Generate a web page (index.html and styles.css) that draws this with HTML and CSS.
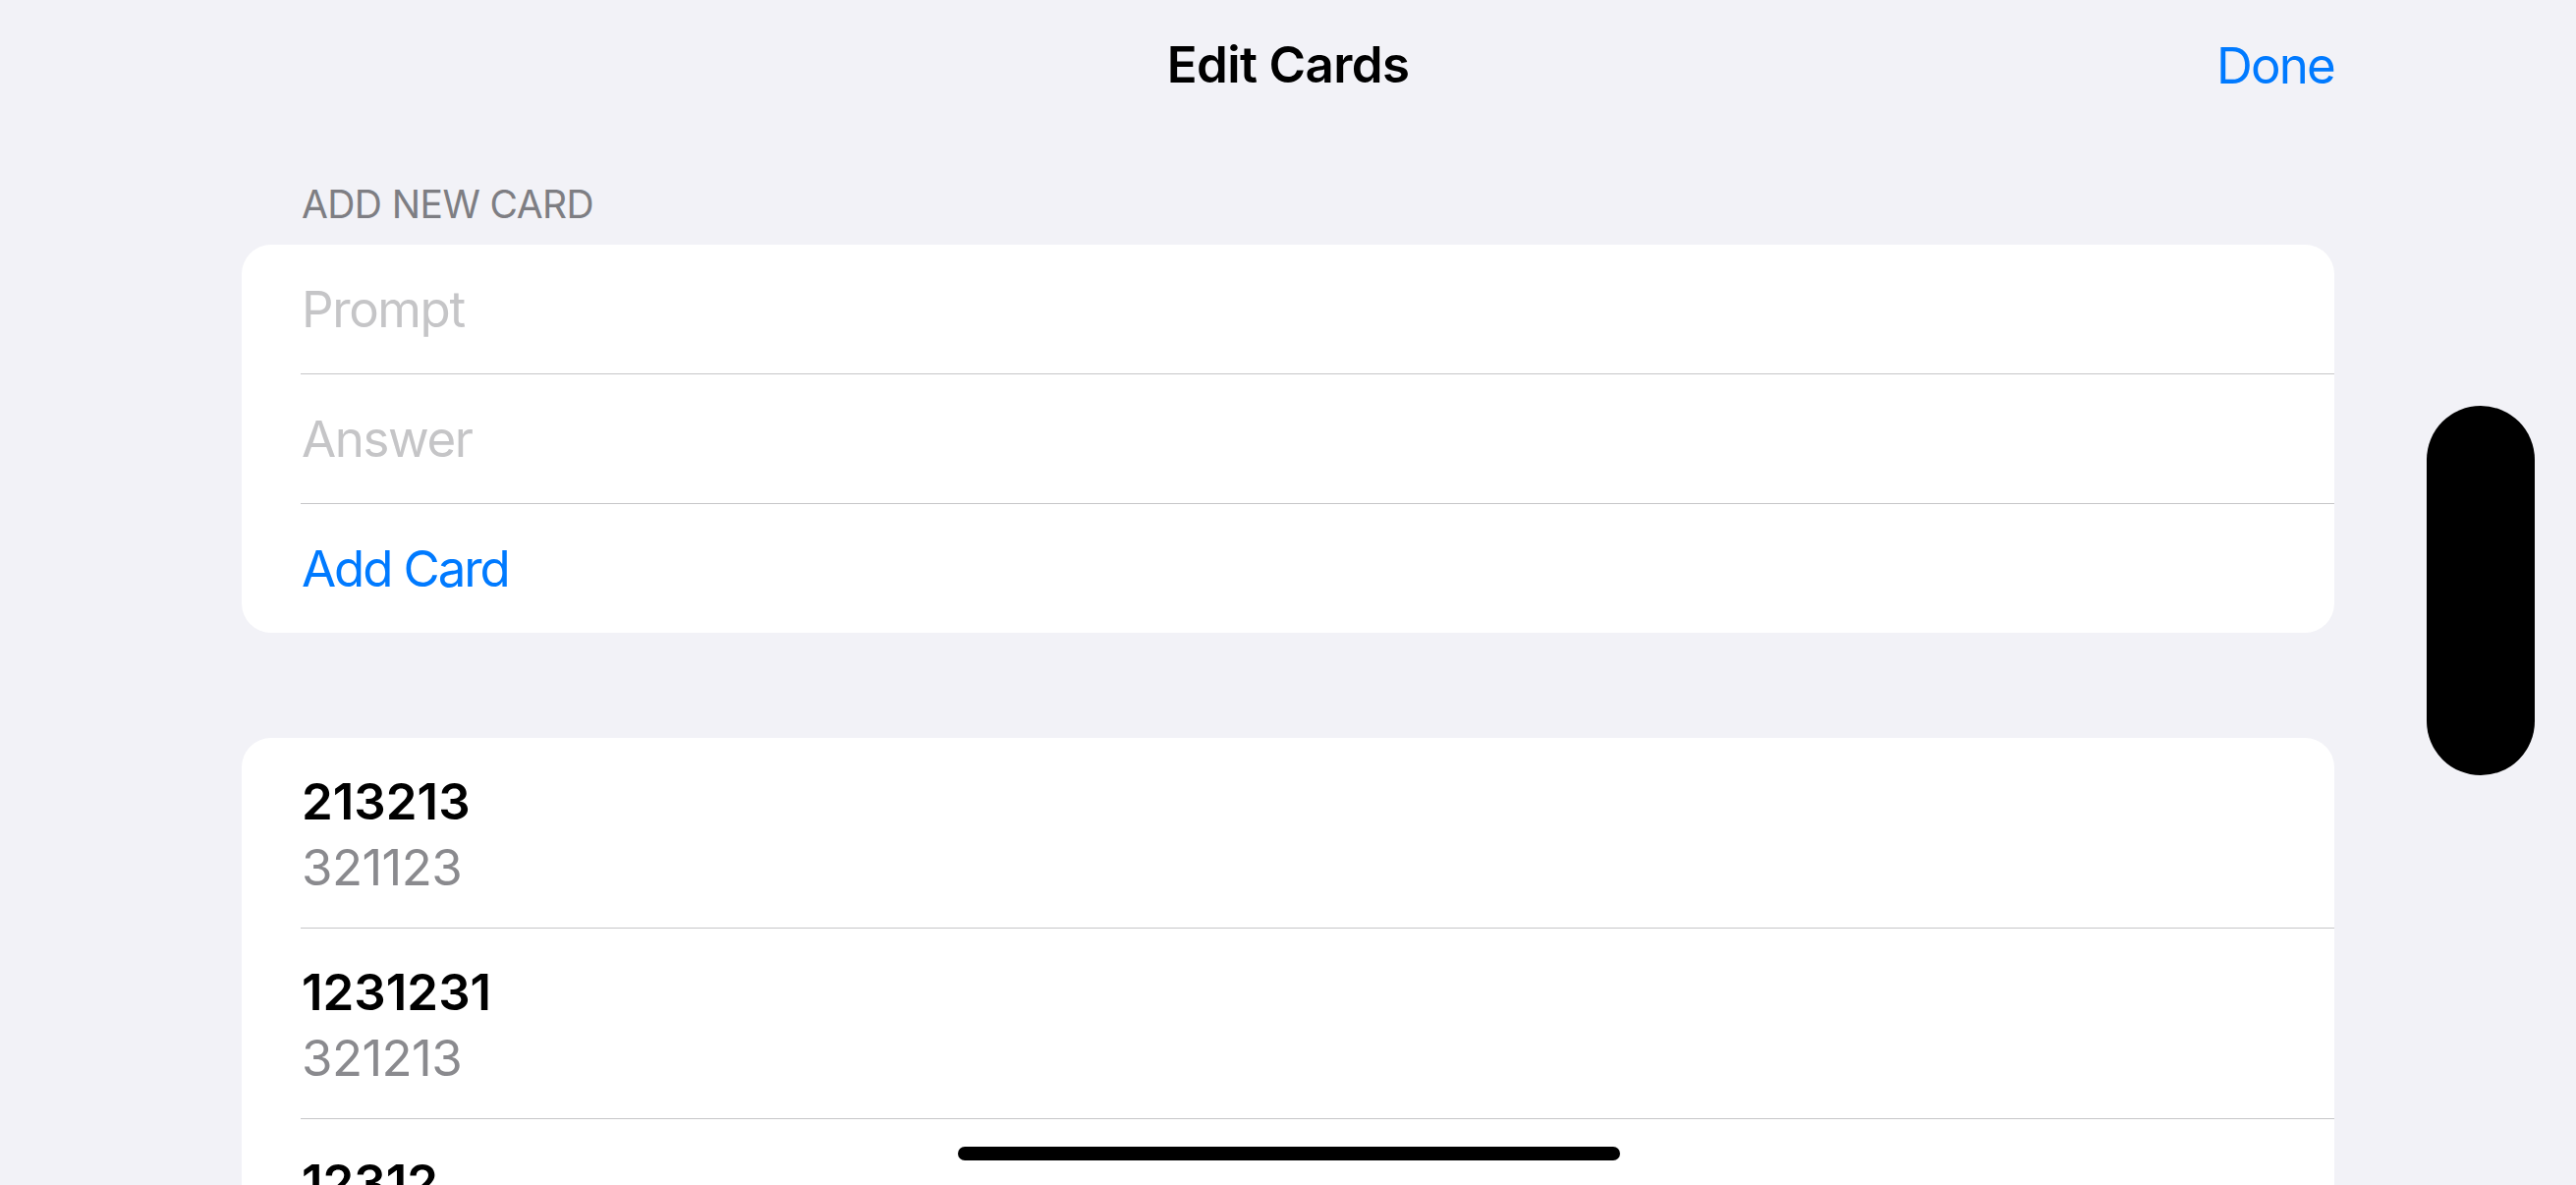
FILE: index.html
```html
<!DOCTYPE html>
<html lang="en">
<head>
<meta charset="utf-8">
<title>Edit Cards</title>
<link rel="stylesheet" href="styles.css">
</head>
<body>
<div class="screen">
  <header class="nav">
    <div class="nav-side"></div>
    <h1 class="nav-title">Edit Cards</h1>
    <div class="nav-side nav-right"><span class="nav-done">Done</span></div>
  </header>

  <main class="content">
    <section class="group">
      <div class="group-header">ADD NEW CARD</div>
      <div class="card">
        <div class="row row-input"><span class="placeholder">Prompt</span></div>
        <div class="sep"></div>
        <div class="row row-input"><span class="placeholder">Answer</span></div>
        <div class="sep"></div>
        <div class="row row-input"><span class="action">Add Card</span></div>
      </div>
    </section>

    <section class="group group-list">
      <div class="card">
        <div class="row row-item">
          <div class="item-title">213213</div>
          <div class="item-sub">321123</div>
        </div>
        <div class="sep"></div>
        <div class="row row-item">
          <div class="item-title">1231231</div>
          <div class="item-sub">321213</div>
        </div>
        <div class="sep"></div>
        <div class="row row-item">
          <div class="item-title">12312</div>
          <div class="item-sub">32112</div>
        </div>
      </div>
    </section>
  </main>

  <div class="island"></div>
  <div class="home-indicator"></div>
</div>
</body>
</html>
```

FILE: styles.css
```css
html, body {
  margin: 0;
  padding: 0;
}

body {
  background: #F2F2F7;
  font-family: Inter, "Noto Sans", "Liberation Sans", sans-serif;
  color: #000;
}

.screen {
  position: relative;
  width: 2622px;
  height: 1206px;
  overflow: hidden;
  background: #F2F2F7;
}

.nav {
  display: grid;
  grid-template-columns: 1fr auto 1fr;
  align-items: start;
  padding: 35px 246px 0 246px;
}

.nav-title {
  margin: 0;
  font-size: 51px;
  line-height: 62px;
  font-weight: 600;
  letter-spacing: -0.6px;
  text-align: center;
}

.nav-right {
  display: flex;
  justify-content: flex-end;
}

.nav-done {
  font-size: 51px;
  line-height: 62px;
  color: #007AFF;
  letter-spacing: -1.8px;
  padding-top: 1px;
}

.content {
  padding: 0 246px;
}

.group {
  margin-top: 86px;
}

.group-list {
  margin-top: 107px;
}

.group-header {
  font-size: 39px;
  line-height: 47px;
  color: #7E7E83;
  padding-left: 61px;
  margin-bottom: 18px;
  letter-spacing: -0.6px;
}

.card {
  background: #fff;
  border-radius: 30px;
  overflow: hidden;
}

.row {
  padding-left: 61px;
}

.row-input {
  height: 131px;
  display: flex;
  align-items: center;
  font-size: 51px;
  line-height: 62px;
  letter-spacing: -2.1px;
}

.sep {
  height: 1px;
  background: #C6C6C8;
  margin-left: 60px;
}

.placeholder {
  color: #C5C5C7;
}

.row-input .placeholder:first-child {
  letter-spacing: -1.4px;
}

.action {
  color: #007AFF;
}

.row-item {
  height: 193px;
  box-sizing: border-box;
  padding-top: 31px;
  font-size: 51px;
  line-height: 67px;
  letter-spacing: -0.6px;
}

.item-title {
  font-weight: 600;
  color: #000;
  letter-spacing: 0;
}

.item-sub {
  color: #8A8A8E;
}

.island {
  position: absolute;
  left: 2470px;
  top: 413px;
  width: 110px;
  height: 376px;
  border-radius: 55px;
  background: #000;
}

.home-indicator {
  position: absolute;
  left: 975px;
  top: 1167px;
  width: 674px;
  height: 14px;
  border-radius: 7px;
  background: #000;
}
```
